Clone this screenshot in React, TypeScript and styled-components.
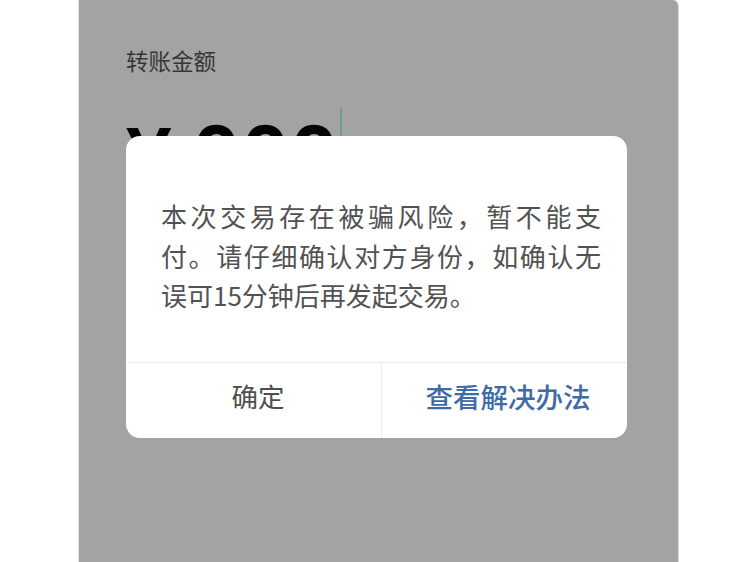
import React from "react";
import styled, { createGlobalStyle, css } from "styled-components";

const GlobalStyle = createGlobalStyle`
  html, body {
    margin: 0;
    padding: 0;
    background: #ffffff;
  }
  body {
    font-family: "Noto Sans CJK SC", "Noto Sans", sans-serif;
  }
`;

const messageLines = [
  { text: "本次交易存在被骗风险，暂不能支", justify: true },
  { text: "付。请仔细确认对方身份，如确认无", justify: true },
  { text: "误可15分钟后再发起交易。", justify: false },
];

function App() {
  return (
    <>
      <GlobalStyle />
      <Page>
        <Screen>
          <Label>转账金额</Label>
          <AmountRow>
            <Currency>¥</Currency>
            <Digits>000</Digits>
            <Cursor />
          </AmountRow>

          <Overlay>
            <Dialog>
              <Message>
                {messageLines.map((line) => (
                  <Line key={line.text} $justify={line.justify}>
                    {line.text}
                  </Line>
                ))}
              </Message>
              <Actions>
                <ActionButton>确定</ActionButton>
                <ActionButton $primary>查看解决办法</ActionButton>
              </Actions>
            </Dialog>
          </Overlay>
        </Screen>
      </Page>
    </>
  );
}

export default App;

const Page = styled.div(
  () => css`
    width: 748px;
    height: 562px;
    display: flex;
    overflow: hidden;
    padding-left: 78px;
    box-sizing: border-box;
  `
);

const Screen = styled.div(
  () => css`
    position: relative;
    width: 601px;
    height: 562px;
    background-color: #a3a3a3;
    border-left: 1px solid #e4e4e4;
    border-right: 1px solid #dedede;
    border-top-right-radius: 6px;
    box-sizing: border-box;
    padding: 45px 0 0 47px;
    display: flex;
    flex-direction: column;
    align-items: flex-start;
  `
);

const Label = styled.div(
  () => css`
    font-size: 22.5px;
    line-height: 30px;
    color: #363636;
  `
);

const AmountRow = styled.div(
  () => css`
    margin-top: 35px;
    display: flex;
    align-items: baseline;
    font-family: "Liberation Sans", Arial, sans-serif;
    font-weight: 700;
    color: #050505;
    line-height: 88px;
  `
);

const Currency = styled.span(
  () => css`
    font-size: 82px;
    margin-right: 21px;
  `
);

const Digits = styled.span(
  () => css`
    font-size: 86px;
    letter-spacing: 1px;
  `
);

const Cursor = styled.span(
  () => css`
    align-self: flex-start;
    width: 2px;
    height: 80px;
    margin-top: -2px;
    margin-left: 1px;
    background-color: #6d9e86;
  `
);

const Overlay = styled.div(
  () => css`
    position: absolute;
    inset: 0;
    display: flex;
    justify-content: center;
    align-items: flex-start;
    padding: 136px 4px 0 0;
  `
);

const Dialog = styled.div(
  () => css`
    width: 501px;
    background-color: #ffffff;
    border-radius: 14px;
    overflow: hidden;
    display: flex;
    flex-direction: column;
  `
);

const Message = styled.div(
  () => css`
    padding: 60px 26px 47px 35px;
    font-size: 26px;
    line-height: 39.5px;
    color: #525252;
  `
);

const Line = styled.div(
  ({ $justify }: { $justify?: boolean }) => css`
    width: 440px;
    white-space: nowrap;
    text-align: ${$justify ? "justify" : "left"};
    text-align-last: ${$justify ? "justify" : "left"};
    text-justify: inter-character;
  `
);

const Actions = styled.div(
  () => css`
    display: grid;
    grid-template-columns: 255px 1fr;
    height: 75px;
    border-top: 1px solid #ececec;
  `
);

const ActionButton = styled.button(
  ({ $primary }: { $primary?: boolean }) => css`
    border: none;
    background: transparent;
    padding: 0 0 9px ${$primary ? "7px" : "9px"};
    margin: 0;
    font-family: "Noto Sans CJK SC", "Noto Sans", sans-serif;
    font-size: ${$primary ? "27.5px" : "26.5px"};
    color: ${$primary ? "#3f6ca5" : "#4e4e4e"};
    font-weight: ${$primary ? 500 : 400};
    border-left: ${$primary ? "1px solid #ececec" : "none"};
    cursor: pointer;
  `
);
